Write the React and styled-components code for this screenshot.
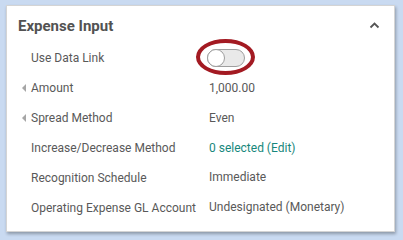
import React from 'react';
import styled, { createGlobalStyle } from 'styled-components';

const GlobalStyle = createGlobalStyle`
  html, body {
    margin: 0;
    padding: 0;
    background: #c9daf1;
  }
  body {
    font-family: Roboto, "Liberation Sans", Arial, sans-serif;
  }
`;

const Page = styled.div`
  padding: 5px 8px 8px 6px;
`;

const Card = styled.section`
  width: 389px;
  height: 227px;
  box-sizing: border-box;
  background: #fff;
  border: 1px solid #d4d4d4;
  box-shadow: 1px 2px 3px rgba(0, 0, 0, 0.3);
  padding-bottom: 9px;
`;

const Header = styled.div`
  display: flex;
  align-items: center;
  justify-content: space-between;
  height: 37px;
  padding: 3px 14px 0 11px;
  box-sizing: border-box;
`;

const Title = styled.h2`
  margin: 0;
  font-size: 15px;
  font-weight: 700;
  color: #525252;
`;

const Chevron = styled.svg`
  width: 11px;
  height: 8px;
  margin-top: -3px;
`;

const Rows = styled.div`
  display: flex;
  flex-direction: column;
`;

const Row = styled.div`
  display: grid;
  grid-template-columns: 9px 178px 1fr;
  align-items: center;
  height: 30px;
  padding-left: 15px;
  font-size: 12px;
  color: #595959;
`;

const Arrow = styled.span`
  width: 0;
  height: 0;
  border-top: 4px solid transparent;
  border-bottom: 4px solid transparent;
  border-right: 4px solid #a6a6a6;
  margin-top: -1px;
`;

const Label = styled.span`
  grid-column: 2;
  white-space: nowrap;
`;

const Value = styled.span`
  grid-column: 3;
  white-space: nowrap;
  color: ${p => (p.$link ? '#17877c' : '#595959')};
  margin-top: ${p => (p.$raise ? '-2px' : '0')};
`;

const ToggleWrap = styled.span`
  grid-column: 3;
  position: relative;
  display: inline-flex;
  width: 38px;
  height: 18px;
  margin-left: -2px;
`;

const Track = styled.span`
  width: 38px;
  height: 18px;
  box-sizing: border-box;
  border: 1px solid #9e9e9e;
  border-radius: 9px;
  background: #e9e9e9;
  position: relative;
`;

const Knob = styled.span`
  position: absolute;
  left: -1px;
  top: -1px;
  width: 18px;
  height: 18px;
  box-sizing: border-box;
  border-radius: 50%;
  border: 1px solid #9e9e9e;
  background: #fff;
`;

const Highlight = styled.span`
  position: absolute;
  left: -11px;
  top: -10px;
  width: 59px;
  height: 36px;
  box-sizing: border-box;
  border: 4px solid #a31a22;
  border-radius: 50%;
  pointer-events: none;
`;

const rows = [
  { label: 'Amount', value: '1,000.00', arrow: true },
  { label: 'Spread Method', value: 'Even', arrow: true },
  { label: 'Increase/Decrease Method', value: '0 selected (Edit)', link: true },
  { label: 'Recognition Schedule', value: 'Immediate', raise: true },
  { label: 'Operating Expense GL Account', value: 'Undesignated (Monetary)', raise: true },
];

export default function App() {
  return (
    <>
      <GlobalStyle />
      <Page>
        <Card>
          <Header>
            <Title>Expense Input</Title>
            <Chevron viewBox="0 0 11 8">
              <path d="M1.5 6.5 L5.5 2.5 L9.5 6.5" fill="none" stroke="#555" strokeWidth="1.8" />
            </Chevron>
          </Header>
          <Rows>
            <Row>
              <Label>Use Data Link</Label>
              <ToggleWrap>
                <Track>
                  <Knob />
                </Track>
                <Highlight />
              </ToggleWrap>
            </Row>
            {rows.map(r => (
              <Row key={r.label}>
                {r.arrow ? <Arrow /> : <span />}
                <Label>{r.label}</Label>
                <Value $link={r.link} $raise={r.raise}>{r.value}</Value>
              </Row>
            ))}
          </Rows>
        </Card>
      </Page>
    </>
  );
}
